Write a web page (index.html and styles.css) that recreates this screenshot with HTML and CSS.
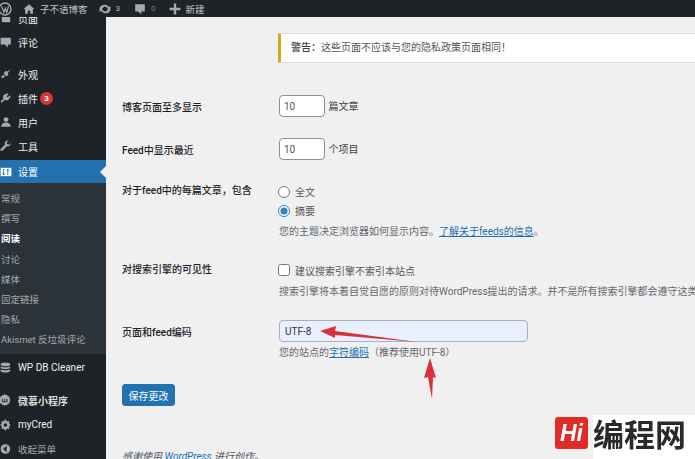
FILE: index.html
```html
<!DOCTYPE html>
<html lang="zh-CN">
<head>
    <meta charset="UTF-8">
    <meta name="viewport" content="width=device-width, initial-scale=1.0">
    <title>阅读设置</title>
    <link rel="stylesheet" href="styles.css">
</head>
<body>
    <div class="adminbar">
        <svg class="wp-logo" viewBox="0 0 20 20"><circle cx="10" cy="10" r="8.5" fill="none" stroke="#a7aaad" stroke-width="2"/><path d="M5 6l3.500 9 2-6 2 6 2.500-9" fill="none" stroke="#a7aaad" stroke-width="1.800"/></svg>
        <svg class="bar-icon home" viewBox="0 0 20 20"><path d="M10 2L1 10h2.500v8h4.500v-5h4v5h4.500v-8H19z" fill="#a7aaad"/></svg>
        <span class="bar-text site">子不语博客</span>
        <svg class="bar-icon sync" viewBox="0 0 20 20"><path d="M10 3a7 7 0 0 1 6 3.500L19 5v8h-7l3-2.500A5.500 5.500 0 0 0 5 8.500L1.500 7.500A8 8 0 0 1 10 3zM10 17a7 7 0 0 1-6-3.500L1 15V7h7L5 9.500a5.500 5.500 0 0 0 10 2l3.500 1A8 8 0 0 1 10 17z" fill="#a7aaad"/></svg>
        <span class="bar-count">3</span>
        <svg class="bar-icon comment" viewBox="0 0 20 20"><path d="M2 2h16v12h-6v5l-5-5H2z" fill="#a7aaad"/></svg>
        <span class="bar-count zero">0</span>
        <svg class="bar-icon plus" viewBox="0 0 20 20"><path d="M8 1h4v7h7v4h-7v7H8v-7H1V8h7z" fill="#a7aaad"/></svg>
        <span class="bar-text">新建</span>
    </div>

    <div class="wrap">
        <div class="sidebar">
            <ul class="menu">
                <li class="item cut">
                    <svg class="icon" viewBox="0 0 20 20"><path d="M3 3h14v14H3z" fill="#a7aaad"/></svg>页面
                </li>
                <li class="item gap-after">
                    <svg class="icon" viewBox="0 0 20 20"><path d="M1 3h17v11h-5v5l-5-5H1z" fill="#a7aaad"/></svg>评论
                </li>
                <li class="item">
                    <svg class="icon" viewBox="0 0 20 20"><path d="M18 2l-6 4-3-1-3 4 5 5 3-3-1-3zM7 11l-5 3 1 3 5-2z" fill="#a7aaad"/></svg>外观
                </li>
                <li class="item">
                    <svg class="icon" viewBox="0 0 20 20"><path d="M12 2l2 2-3 3 2 2 3-3 2 2-4 5-3 1-3-1-5 5-2-2 5-5-1-3 1-3z" fill="#a7aaad"/></svg>插件<span class="badge">3</span>
                </li>
                <li class="item">
                    <svg class="icon" viewBox="0 0 20 20"><circle cx="10" cy="6" r="4" fill="#a7aaad"/><path d="M2 18c0-4 3-7 8-7s8 3 8 7z" fill="#a7aaad"/></svg>用户
                </li>
                <li class="item">
                    <svg class="icon" viewBox="0 0 20 20"><path d="M18 5l-3 3-3-1-1-3 3-3c-3-1-6 1-6 4 0 1 0 2 .5 2.500L1 15c-1 1 0 4 3 3l7.500-7.500c3 1 7-2 6.500-5.500z" fill="#a7aaad"/></svg>工具
                </li>
                <li class="item current">
                    <svg class="icon" viewBox="0 0 20 20"><path d="M1 3h18v14H1z" fill="#fff"/><path d="M6 5v10M4 12.500L6 15l2-2.500M13 15V5M11 7.500L13 5l2 2.500" fill="none" stroke="#2271b1" stroke-width="1.600"/></svg>设置
                </li>
            </ul>
            <ul class="submenu">
                <li>常规</li>
                <li>撰写</li>
                <li class="on">阅读</li>
                <li>讨论</li>
                <li>媒体</li>
                <li>固定链接</li>
                <li>隐私</li>
                <li>Akismet 反垃圾评论</li>
            </ul>
            <ul class="menu lower">
                <li class="item db">
                    <svg class="icon" viewBox="0 0 20 20"><ellipse cx="9" cy="4" rx="8" ry="3" fill="#a7aaad"/><path d="M1 7c2 2.500 14 2.500 16 0v3c-2 2.500-14 2.500-16 0zM1 12c2 2.500 14 2.500 16 0v3c-2 3.500-14 3.500-16 0z" fill="#a7aaad"/></svg>WP DB Cleaner
                </li>
                <li class="item mini">
                    <svg class="icon" viewBox="0 0 20 20"><circle cx="8" cy="10" r="9" fill="#a7aaad"/><path d="M4 8v5h8V8M8 8v5" fill="none" stroke="#1d2327" stroke-width="1.500"/></svg>微慕小程序
                </li>
                <li class="item">
                    <svg class="icon" viewBox="0 0 20 20"><circle cx="9" cy="10" r="5" fill="none" stroke="#a7aaad" stroke-width="4"/><path d="M9 1v3M9 16v3M1 10h3M14 10h3M3 4l2 2M13 14l2 2M15 4l-2 2M5 14l-2 2" stroke="#a7aaad" stroke-width="2.500"/></svg>myCred
                </li>
                <li class="item collapse">
                    <svg class="icon" viewBox="0 0 20 20"><circle cx="9" cy="10" r="8" fill="#a7aaad"/><path d="M11 5l-6 5 6 5z" fill="#1d2327"/></svg>收起菜单
                </li>
            </ul>
        </div>

        <div class="content">
            <div class="notice"><b>警告：</b>这些页面不应该与您的隐私政策页面相同！</div>

            <div class="row posts">
                <div class="label">博客页面至多显示</div>
                <div class="field"><input class="small" type="text" value="10"> 篇文章</div>
            </div>
            <div class="row feed">
                <div class="label">Feed中显示最近</div>
                <div class="field"><input class="small" type="text" value="10"> 个项目</div>
            </div>
            <div class="row each">
                <div class="label">对于feed中的每篇文章，包含</div>
                <div class="field">
                    <label class="choice"><input type="radio" name="show"> 全文</label>
                    <label class="choice"><input type="radio" name="show" checked> 摘要</label>
                    <p class="desc">您的主题决定浏览器如何显示内容。<a href="#">了解关于feeds的信息</a>。</p>
                </div>
            </div>
            <div class="row seo">
                <div class="label">对搜索引擎的可见性</div>
                <div class="field">
                    <label class="choice"><input type="checkbox"> 建议搜索引擎不索引本站点</label>
                    <p class="desc nowrap">搜索引擎将本着自觉自愿的原则对待WordPress提出的请求。并不是所有搜索引擎都会遵守这类请求。</p>
                </div>
            </div>
            <div class="row charset">
                <div class="label">页面和feed编码</div>
                <div class="field">
                    <input class="wide" type="text" value="UTF-8">
                    <p class="desc tight">您的站点的<a href="#">字符编码</a>（推荐使用UTF-8）</p>
                </div>
            </div>
            <button class="save">保存更改</button>
            <p class="thanks">感谢使用 <a href="#">WordPress</a> 进行创作。</p>

            <svg class="arrow" viewBox="0 0 695 459"><path d="M320 331l16-5-1 5 82 11-82-7v3z" fill="#d9303a"/><path d="M430 358l6 20-3-1-1 22-4-22-4 1z" fill="#d9303a"/></svg>
        </div>
    </div>

    <div class="mark">
        <span class="mark-logo">Hi</span>
        <span class="mark-name">编程网</span>
    </div>
</body>
</html>
```

FILE: styles.css
```css
* {
    box-sizing: border-box;
}
html, body {
    height: 100%;
}
body {
    margin: 0;
    overflow: hidden;
    font-family: Roboto, "Noto Sans CJK SC", sans-serif;
    font-size: 10px;
    color: #3c434a;
    background-color: #f0f0f1;
    display: flex;
    flex-direction: column;
}
a {
    color: #2271b1;
}
ul {
    list-style: none;
    margin: 0;
    padding: 0;
}

.adminbar {
    height: 17px;
    flex: none;
    background-color: #1d2327;
    color: #c3c4c7;
    display: flex;
    align-items: center;
    overflow: hidden;
    font-size: 9.200px;
}
.wp-logo {
    width: 14px;
    height: 14px;
    margin-left: -2px;
}
.bar-icon {
    width: 12px;
    height: 12px;
}
.bar-icon.home {
    margin-left: 11px;
}
.bar-icon.sync {
    margin-left: 11px;
}
.bar-icon.comment {
    margin-left: 14px;
}
.bar-icon.plus {
    margin-left: 13px;
}
.bar-text {
    margin-left: 5px;
    font-size: 9.500px;
}
.bar-count {
    margin-left: 5px;
    font-size: 8px;
}
.bar-count.zero {
    color: #787c82;
}

.wrap {
    flex: 1;
    display: flex;
    min-height: 0;
}
.sidebar {
    width: 106px;
    flex: none;
    background-color: #1d2327;
    overflow: hidden;
}
.item {
    height: 24px;
    display: flex;
    align-items: center;
    color: #f0f0f1;
    font-size: 10px;
}
.item.cut {
    margin-top: -11px;
}
.item.gap-after {
    margin-bottom: 8px;
}
.item.current {
    height: 23px;
    margin-top: 2px;
    color: #fff;
    background-color: #2271b1;
    position: relative;
}
.item.current::after {
    content: "";
    position: absolute;
    right: 0;
    top: 6px;
    border: 6px solid transparent;
    border-right-color: #f0f0f1;
    border-left: 0;
}
.icon {
    width: 12px;
    height: 12px;
    margin: 0 6px 0 0;
    flex: none;
}
.badge {
    width: 13px;
    height: 13px;
    border-radius: 50%;
    margin-left: 2px;
    background-color: #d63638;
    color: #fff;
    font-size: 8px;
    font-weight: 700;
    line-height: 13px;
    text-align: center;
}
.submenu {
    background-color: #2c3338;
    padding: 6px 0 3px;
}
.submenu li {
    height: 20.200px;
    line-height: 20px;
    padding-left: 1px;
    font-size: 9.500px;
    color: #a7aaad;
    white-space: nowrap;
}
.submenu li.on {
    color: #fff;
    font-weight: 700;
}
.item.db {
    margin-top: 2px;
    margin-bottom: 8px;
}
.item.mini {
    height: 25px;
    font-weight: 700;
    color: #dcdcde;
}
.item.collapse {
    color: #a7aaad;
    font-size: 9.500px;
}

.content {
    flex: 1;
    min-width: 0;
    padding: 16px 0 0 16px;
    position: relative;
}
.notice {
    margin-left: 156px;
    height: 30px;
    line-height: 28px;
    padding-left: 10px;
    background-color: #fff;
    border: 1px solid #dcdcde;
    border-left: 3px solid #dba617;
    border-right: 0;
    color: #50575e;
}
.notice b {
    font-weight: 500;
    color: #3c434a;
}
.row {
    display: flex;
}
.label {
    width: 157px;
    flex: none;
    font-weight: 500;
    color: #1d2327;
}
.field {
    flex: 1;
    min-width: 0;
}
.row.posts {
    margin-top: 32px;
    align-items: center;
}
.row.feed {
    margin-top: 21px;
    align-items: center;
}
.row.each {
    margin-top: 22px;
}
.row.seo {
    margin-top: 21px;
}
.row.charset {
    margin-top: 20px;
}
.row.charset .label {
    padding-top: 4px;
}
.small {
    width: 46px;
    height: 22px;
    margin: 0 1px 0 0;
    padding: 0 4px;
    border: 1px solid #8c8f94;
    border-radius: 4px;
    background-color: #fff;
    font: 10px Roboto, sans-serif;
    color: #50575e;
}
.wide {
    display: block;
    width: 249px;
    height: 22px;
    padding: 0 5px;
    border: 1px solid #a9b0bd;
    border-radius: 4px;
    background-color: #e8f0fe;
    font: 10px Roboto, sans-serif;
    color: #2c3338;
}
.choice {
    display: flex;
    align-items: center;
    height: 19px;
    margin-left: -1px;
    color: #50575e;
}
.choice input {
    width: 12px;
    height: 12px;
    margin: 0 5px 0 0;
    accent-color: #3582c4;
}
.desc {
    margin: 4px 0 0;
    height: 16px;
    line-height: 16px;
    color: #646970;
    white-space: nowrap;
}
.desc.tight {
    margin-top: 3px;
}
.row.seo .choice {
    height: 18px;
}
.row.seo .desc {
    margin-top: 5px;
}
.save {
    display: block;
    margin-top: 23px;
    width: 53px;
    height: 22px;
    padding: 0;
    border: 1px solid #2271b1;
    border-radius: 3px;
    background-color: #2271b1;
    color: #fff;
    font: 10px Roboto, "Noto Sans CJK SC", sans-serif;
}
.thanks {
    margin: 42px 0 0;
    font-style: italic;
    color: #50575e;
}
.thanks a {
    text-decoration: none;
}

.arrow {
    position: absolute;
    left: -106px;
    top: -17px;
    width: 695px;
    height: 459px;
    pointer-events: none;
}

.mark {
    position: fixed;
    right: 0;
    bottom: 0;
    width: 140px;
    height: 44px;
    display: flex;
    align-items: flex-start;
}
.mark-logo {
    width: 33px;
    height: 32px;
    margin: 2px 5px 0 0;
    border-radius: 3px;
    background-color: #e02b27;
    color: #fff;
    font: italic 700 23px/32px "Liberation Sans", sans-serif;
    text-align: center;
}
.mark-name {
    flex: 1;
    height: 44px;
    background-color: #fff;
    font: 700 31px/36px "Noto Sans CJK SC", sans-serif;
    color: #2a2a2a;
    white-space: nowrap;
}
```
